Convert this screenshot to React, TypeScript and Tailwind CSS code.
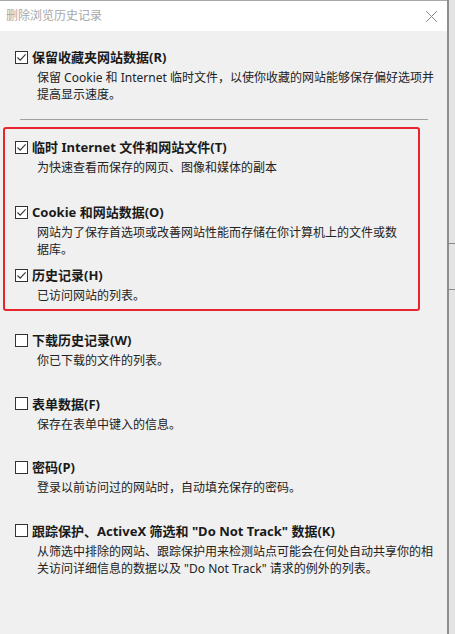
import React from 'react';

interface HistoryOption {
  label: string;
  lines: string[];
  checked: boolean;
  height: string;
}

const FONT = { fontFamily: '"Noto Sans", "Noto Sans CJK SC", sans-serif' };

const CheckBox: React.FC<{ checked: boolean }> = ({ checked }) => (
  <span className="flex h-[13px] w-[13px] shrink-0 items-center justify-center border border-[#333333] bg-white">
    {checked && (
      <svg width="11" height="11" viewBox="0 0 11 11" fill="none">
        <path d="M1.5 5.5 L4.2 8.2 L9.6 2.4" stroke="#333333" strokeWidth="1.1" />
      </svg>
    )}
  </span>
);

const OptionItem: React.FC<{ option: HistoryOption }> = ({ option }) => (
  <div className={`flex flex-col ${option.height}`}>
    <div className="flex h-[20px] items-center gap-[4px]">
      <CheckBox checked={option.checked} />
      <span className="whitespace-nowrap text-[13px] font-bold leading-[20px] text-[#1a1a1a]">
        {option.label}
      </span>
    </div>
    <div className="mt-[2px] pl-[22px] text-[12px] leading-[17px] text-[#222222]">
      {option.lines.map((line, i) => (
        <div key={i} className="whitespace-nowrap">{line}</div>
      ))}
    </div>
  </div>
);

const boxed: HistoryOption[] = [
  {
    label: '临时 Internet 文件和网站文件(T)',
    lines: ['为快速查看而保存的网页、图像和媒体的副本'],
    checked: true,
    height: 'h-[65px]',
  },
  {
    label: 'Cookie 和网站数据(O)',
    lines: ['网站为了保存首选项或改善网站性能而存储在你计算机上的文件或数', '据库。'],
    checked: true,
    height: 'h-[63px]',
  },
  {
    label: '历史记录(H)',
    lines: ['已访问网站的列表。'],
    checked: true,
    height: 'h-[40px]',
  },
];

const others: HistoryOption[] = [
  {
    label: '下载历史记录(W)',
    lines: ['你已下载的文件的列表。'],
    checked: false,
    height: 'h-[63.5px]',
  },
  {
    label: '表单数据(F)',
    lines: ['保存在表单中键入的信息。'],
    checked: false,
    height: 'h-[63.5px]',
  },
  {
    label: '密码(P)',
    lines: ['登录以前访问过的网站时，自动填充保存的密码。'],
    checked: false,
    height: 'h-[63.5px]',
  },
  {
    label: '跟踪保护、ActiveX 筛选和 "Do Not Track" 数据(K)',
    lines: [
      '从筛选中排除的网站、跟踪保护用来检测站点可能会在何处自动共享你的相',
      '关访问详细信息的数据以及 "Do Not Track" 请求的例外的列表。',
    ],
    checked: false,
    height: 'h-[63.5px]',
  },
];

export default function App() {
  return (
    <div className="flex h-[634px] w-[455px] overflow-hidden bg-[#f0f0f0]" style={FONT}>
      {/* dialog */}
      <div className="flex w-[447px] flex-col border-t border-[#a8a8a8]">
        {/* title bar */}
        <div className="flex h-[30px] shrink-0 items-center justify-between bg-white pl-[6px] pr-[9px]">
          <span className="text-[12px] leading-none text-[#a8a8a8]">删除浏览历史记录</span>
          <svg width="13" height="13" viewBox="0 0 13 13" fill="none">
            <path d="M1 1 L12 12 M12 1 L1 12" stroke="#8c8c8c" strokeWidth="1" />
          </svg>
        </div>

        <div className="flex flex-col pt-[16px]">
          {/* keep favourites */}
          <div className="h-[72px] pl-[15px]">
            <OptionItem
              option={{
                label: '保留收藏夹网站数据(R)',
                lines: [
                  '保留 Cookie 和 Internet 临时文件，以使你收藏的网站能够保存偏好选项并',
                  '提高显示速度。',
                ],
                checked: true,
                height: 'h-[72px]',
              }}
            />
          </div>
          <div className="ml-[20px] h-[1px] w-[408px] bg-[#a0a0a0]" />

          {/* highlighted group */}
          <div className="ml-[3px] mt-[7px] h-[184px] w-[417px] rounded-[3px] border-2 border-[#e8242c] pl-[10px] pt-[8px]">
            {boxed.map((option) => (
              <OptionItem key={option.label} option={option} />
            ))}
          </div>

          <div className="mt-[19px] pl-[15px]">
            {others.map((option) => (
              <OptionItem key={option.label} option={option} />
            ))}
          </div>
        </div>
      </div>

      {/* window edge */}
      <div className="w-[2px] bg-[#8e8e8e]" />
      <div className="flex w-[6px] flex-col bg-[#e4e4e4]">
        <div className="h-[243px]" />
        <div className="h-[1px] bg-[#8a8a8a]" />
        <div className="h-[45px]" />
        <div className="h-[1px] bg-[#8a8a8a]" />
      </div>
    </div>
  );
}
